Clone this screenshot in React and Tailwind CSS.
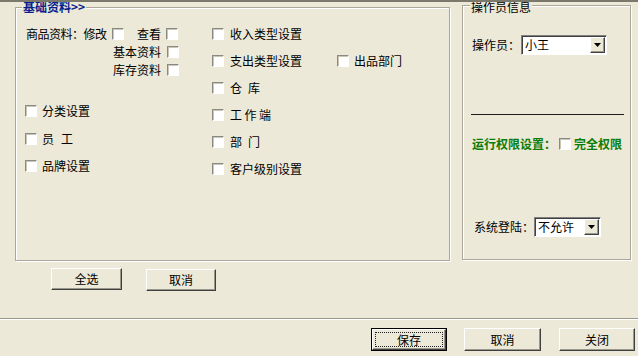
import React from 'react'

const font = { fontFamily: '"Noto Sans CJK SC", "Liberation Sans", sans-serif' }

// sunken classic checkbox
const Check = ({ className = '' }) => (
  <span
    className={`inline-block shrink-0 w-[12px] h-[12px] bg-white border border-t-[#8a8a84] border-l-[#8a8a84] border-r-white border-b-white shadow-[inset_1px_1px_0_#c9c6b6] ${className}`}
  />
)

// raised classic button
const Btn = ({ children, className = '', isDefault = false }) => {
  if (isDefault) {
    return (
      <div className={`relative border border-black bg-[#ece9d8] ${className}`}>
        <div className="w-full h-full flex items-center justify-center border border-t-white border-l-white border-r-[#404040] border-b-[#404040] shadow-[inset_-1px_-1px_0_#9a988a] text-[12px] leading-none text-black">
          {children}
        </div>
        <div className="absolute inset-[3px] border border-dotted border-[#222]" />
      </div>
    )
  }
  return (
    <div
      className={`flex items-center justify-center bg-[#ece9d8] border border-t-white border-l-white border-r-[#404040] border-b-[#404040] shadow-[inset_-1px_-1px_0_#9a988a] text-[12px] leading-none text-black ${className}`}
    >
      {children}
    </div>
  )
}

// classic combo box
const Select = ({ value, className = '' }) => (
  <div
    className={`flex items-stretch bg-white border border-t-[#808080] border-l-[#808080] border-r-white border-b-white shadow-[inset_1px_1px_0_#404040] ${className}`}
  >
    <div className="flex-1 pl-[3px] flex items-center text-[12px] leading-none text-black">{value}</div>
    <div className="w-[15px] my-[1px] mr-[1px] flex items-center justify-center bg-[#ece9d8] border border-t-white border-l-white border-r-[#404040] border-b-[#404040] shadow-[inset_-1px_-1px_0_#9a988a]">
      <svg width="7" height="4" viewBox="0 0 7 4">
        <polygon points="0,0 7,0 3.5,4" fill="#000" />
      </svg>
    </div>
  </div>
)

const Spaced = ({ chars, gap }) => (
  <span className="flex" style={{ gap }}>
    {chars.map((c) => (
      <span key={c}>{c}</span>
    ))}
  </span>
)

const Row = ({ label, h, gap = 'gap-[5px]' }) => (
  <div className={`flex items-center ${gap} ${h}`}>
    <Check />
    <span className="text-[12px] leading-none text-black">{label}</span>
  </div>
)

const GroupBox = ({ title, titleClass, className = '', children }) => (
  <div
    className={`relative border border-[#aca899] shadow-[1px_1px_0_#fff,inset_1px_1px_0_#fff] ${className}`}
  >
    <div className={`absolute bg-[#ece9d8] px-[1px] text-[12px] leading-[12px] ${titleClass}`}>
      {title}
    </div>
    {children}
  </div>
)

export default function App() {
  return (
    <div className="w-[638px] h-[356px] bg-[#ece9d8] overflow-hidden flex flex-col" style={font}>
      <div className="h-[2px] shrink-0 bg-[#7b796c] relative z-10" />

      <div className="flex h-[316px] shrink-0">
        {/* left side */}
        <div className="flex flex-col ml-[15px] w-[435px]">
          <GroupBox
            title="基础资料>>"
            titleClass="top-[-7px] left-[6px] text-[#0b1e8c] font-bold"
            className="mt-[5px] h-[254px]"
          >
            <div className="flex pl-[9px] pt-[12px]">
              {/* column A */}
              <div className="w-[187px] flex flex-col pt-[4px]">
                <div className="flex items-center h-[19px] text-[12px] leading-none text-black">
                  <span className="w-[87px] pl-[1px] tracking-[-0.5px]">商品资料：修改</span>
                  <Check />
                  <span className="ml-[13px]">查看</span>
                  <Check className="ml-[5px]" />
                </div>
                <div className="flex items-center h-[18px] text-[12px] leading-none text-black">
                  <span className="ml-[88px] w-[54px]">基本资料</span>
                  <Check />
                </div>
                <div className="flex items-center h-[18px] text-[12px] leading-none text-black">
                  <span className="ml-[88px] w-[54px]">库存资料</span>
                  <Check />
                </div>
                <div className="mt-[18.5px]">
                  <Row label="分类设置" h="h-[27.5px]" />
                  <Row label={<Spaced chars={['员', '工']} gap="7px" />} h="h-[27.5px]" />
                  <Row label="品牌设置" h="h-[27.5px]" />
                </div>
              </div>

              {/* column B */}
              <div className="w-[125px] flex flex-col">
                <Row label="收入类型设置" h="h-[27px]" gap="gap-[6px]" />
                <Row label="支出类型设置" h="h-[27px]" gap="gap-[6px]" />
                <Row label={<Spaced chars={['仓', '库']} gap="6px" />} h="h-[27px]" gap="gap-[6px]" />
                <Row label={<Spaced chars={['工', '作', '端']} gap="2.5px" />} h="h-[27px]" gap="gap-[6px]" />
                <Row label={<Spaced chars={['部', '门']} gap="6px" />} h="h-[27px]" gap="gap-[6px]" />
                <Row label="客户级别设置" h="h-[27px]" gap="gap-[6px]" />
              </div>

              {/* column C */}
              <div className="flex flex-col pt-[27px]">
                <Row label="出品部门" h="h-[27px]" />
              </div>
            </div>
          </GroupBox>

          <div className="flex mt-[7px]">
            <Btn className="ml-[36px] w-[71px] h-[22px]">全选</Btn>
            <Btn className="ml-[24px] w-[70px] h-[22px] mt-[1px]">取消</Btn>
          </div>
        </div>

        {/* right side */}
        <GroupBox
          title="操作员信息"
          titleClass="top-[-5px] left-[7px] text-black"
          className="ml-[12px] mt-[3px] w-[169px] h-[255px]"
        >
          <div className="flex flex-col pt-[29px]">
            <div className="flex items-center pl-[9px]">
              <span className="w-[49px] text-[12px] leading-none text-black">操作员：</span>
              <Select value="小王" className="w-[86px] h-[20px]" />
            </div>
            <div className="ml-[8px] mt-[59px] w-[153px] h-[1px] bg-[#1e1e1e]" />
            <div className="flex items-center pl-[9px] mt-[22px] h-[13px] text-[12px] leading-none font-bold text-[#0a7d0a]">
              <span className="w-[87px]">运行权限设置：</span>
              <Check />
              <span className="ml-[3px]">完全权限</span>
            </div>
            <div className="flex items-center pl-[11px] mt-[67px]">
              <span className="w-[60px] text-[12px] leading-none text-black">系统登陆：</span>
              <Select value="不允许" className="w-[67px] h-[20px]" />
            </div>
          </div>
        </GroupBox>
      </div>

      <div className="h-[1px] shrink-0 bg-[#99978a]" />
      <div className="h-[1px] shrink-0 bg-white" />

      <div className="flex mt-[8px]">
        <Btn isDefault className="ml-[371px] w-[76px] h-[23px]">保存</Btn>
        <Btn className="ml-[17px] w-[77px] h-[23px]">取消</Btn>
        <Btn className="ml-[18px] w-[76px] h-[23px]">关闭</Btn>
      </div>
    </div>
  )
}
